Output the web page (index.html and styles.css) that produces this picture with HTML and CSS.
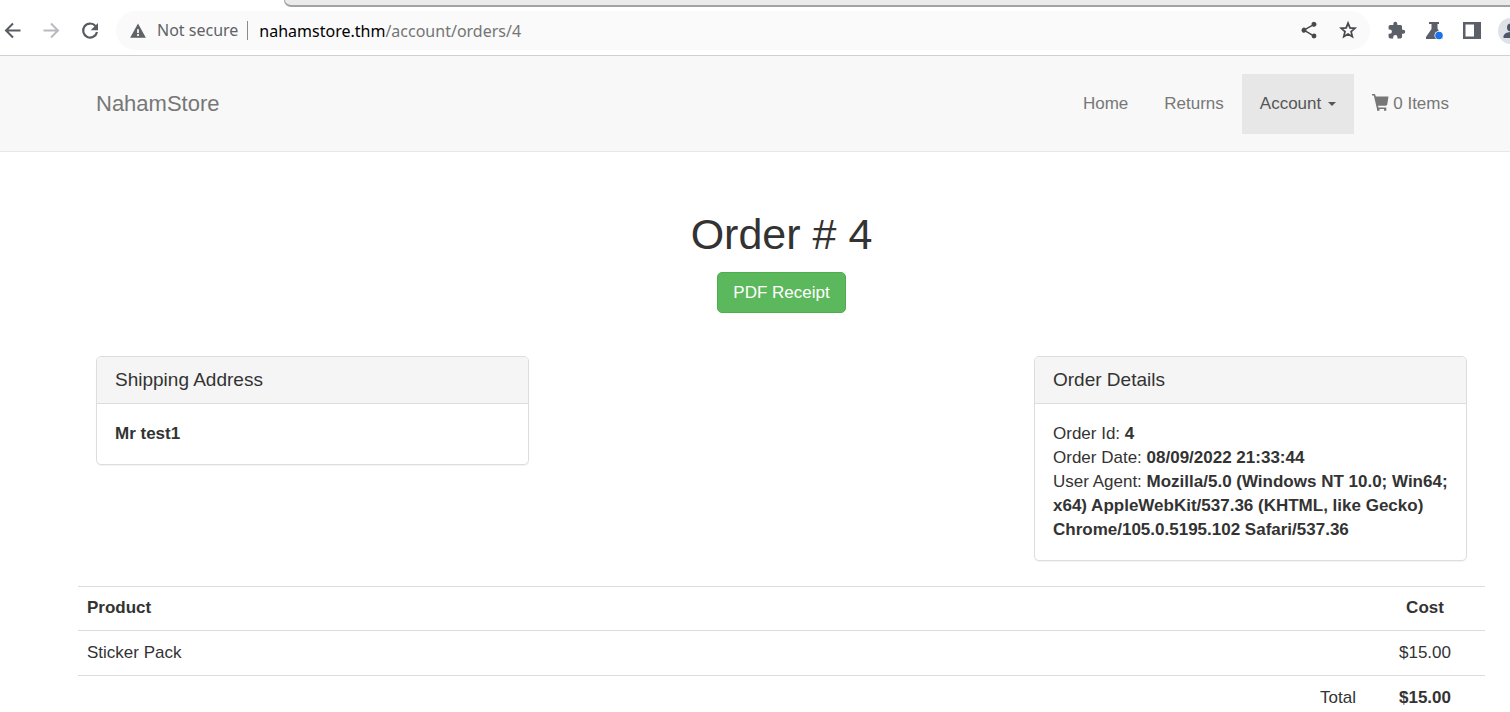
FILE: index.html
```html
<!DOCTYPE html>
<html lang="en">
<head>
<meta charset="utf-8">
<title>NahamStore</title>
<link rel="stylesheet" href="styles.css">
</head>
<body>
<div class="browser">
  <div class="window-edge"></div>
  <div class="toolbar">
    <div class="history">
      <button class="tool" type="button" aria-label="Back"><svg width="24" height="24" viewBox="0 0 24 24" fill="none" stroke="#575c64" stroke-width="2"><path d="M20.500 11.500H6M13 4.500l-7 7 7 7"/></svg></button>
      <button class="tool" type="button" aria-label="Forward" disabled><svg width="24" height="24" viewBox="0 0 24 24" fill="none" stroke="#b9babd" stroke-width="2"><path d="M4.500 11.500H18.500M12 4.500l7 7-7 7"/></svg></button>
      <button class="tool" type="button" aria-label="Reload"><svg width="24" height="24" viewBox="0 0 24 24" fill="none"><path d="M17.500 7A7 7 0 1 0 19 13" stroke="#575c64" stroke-width="2.200"/><path d="M20 4v7.300h-7.300z" fill="#575c64"/></svg></button>
    </div>
    <div class="address">
      <svg width="18" height="18" viewBox="0 0 24 24" fill="#5f6368"><path d="M1.500 21h21L12 2zM13.200 18.500h-2.400v-2.400h2.400zm0-4h-2.400V9.500h2.400z" fill-rule="evenodd"/></svg>
      <span class="security">Not secure</span>
      <span class="url"><span class="host">nahamstore.thm</span>/account/orders/4</span>
      <button class="tool" type="button" aria-label="Share"><svg width="20" height="20" viewBox="0 0 24 24" fill="#47494d"><path d="M18 15.080c-.76 0-1.440.3-1.960.77L8.910 11.700c.05-.23.09-.46.09-.7s-.04-.47-.09-.7l7.050-4.110A3 3 0 1 0 15 4c0 .24.040.47.090.7L8.040 8.810a3 3 0 1 0 0 4.380l7.120 4.160c-.05.21-.08.43-.08.650a2.920 2.920 0 1 0 2.920-2.920z"/></svg></button>
      <button class="tool" type="button" aria-label="Bookmark this page"><svg width="21" height="21" viewBox="0 0 24 24" fill="none" stroke="#47494d" stroke-width="2"><path d="M11.500 3.600l2.200 5.400 5.700.5-4.400 3.800 1.400 5.700-4.900-3.100L6.600 19 8 13.300 3.600 9.500 9.300 9z"/></svg></button>
    </div>
    <div class="extensions">
      <button class="tool" type="button" aria-label="Extensions"><svg width="19" height="19" viewBox="0 0 24 24" fill="#5b5f68"><path d="M20.500 11H19V7a2 2 0 0 0-2-2h-4V3.500a2.500 2.500 0 0 0-5 0V5H4a2 2 0 0 0-2 2v3.800h1.500a2.700 2.700 0 0 1 0 5.400H2V20c0 1.100.9 2 2 2h3.800v-1.500a2.700 2.700 0 0 1 5.400 0V22H17a2 2 0 0 0 2-2v-4h1.500a2.500 2.500 0 0 0 0-5z"/></svg></button>
      <button class="tool" type="button" aria-label="Experiments"><svg width="20" height="20" viewBox="0 0 20 20"><path d="M5 1h10v2h-1.500v4.500L18.500 17v1H2v-2L7.500 8V3H5z" fill="#5b5f68"/><circle cx="15" cy="14.500" r="4.500" fill="#fff"/><circle cx="15" cy="14.500" r="3.800" fill="#1a73e8"/></svg></button>
      <button class="tool" type="button" aria-label="Side panel"><svg width="20" height="20" viewBox="0 0 20 20"><path d="M1 1h18v17H1zM3.500 3.500v12H12v-12z" fill="#5b5f68" fill-rule="evenodd"/></svg></button>
      <button class="tool avatar" type="button" aria-label="Profile"><svg width="26" height="26" viewBox="0 0 26 26"><circle cx="13" cy="13" r="13" fill="#dee1e6"/><circle cx="13" cy="9.500" r="4" fill="#4c566a"/><path d="M5.500 20v-1.500c0-3 4.500-4.500 7.500-4.500s7.500 1.500 7.500 4.500V20z" fill="#4c566a"/></svg></button>
    </div>
  </div>
</div>

<header class="navbar">
  <a class="brand" href="#">NahamStore</a>
  <nav class="menu">
    <a href="#">Home</a>
    <a href="#">Returns</a>
    <a class="active" href="#">Account<span class="caret"></span></a>
    <a href="#"><svg class="cart" width="17" height="21" viewBox="0 0 17 21"><path d="M0 0h3l.8 2.500H16.500l-1.300 8.300-1.200 1H6l.5 1.700h7.800V15H5L1.800 1.500H0z" fill="#777"/><path d="M5 15h2.500v1.800H5zm7 0h2.300v1.800H12z" fill="#777"/></svg> 0 Items</a>
  </nav>
</header>

<main class="container">
  <h1>Order # 4</h1>
  <div class="actions"><a class="btn" href="#">PDF Receipt</a></div>
  <div class="panels">
    <section class="panel">
      <h2>Shipping Address</h2>
      <div class="panel-body"><b>Mr test1</b></div>
    </section>
    <section class="panel details">
      <h2>Order Details</h2>
      <div class="panel-body">
        <div>Order Id: <b>4</b></div>
        <div>Order Date: <b>08/09/2022 21:33:44</b></div>
        <div>User Agent: <b>Mozilla/5.0 (Windows NT 10.0; Win64; x64) AppleWebKit/537.36 (KHTML, like Gecko) Chrome/105.0.5195.102 Safari/537.36</b></div>
      </div>
    </section>
  </div>
  <table class="items">
    <thead><tr><th>Product</th><th class="cost">Cost</th></tr></thead>
    <tbody>
      <tr><td>Sticker Pack</td><td class="cost">$15.00</td></tr>
      <tr><td class="total">Total</td><td class="cost"><b>$15.00</b></td></tr>
    </tbody>
  </table>
</main>
</body>
</html>
```
FILE: styles.css
```css
* { box-sizing: border-box; }

body {
  margin: 0;
  height: 100vh;
  overflow: hidden;
  background: #fff;
  color: #333;
  font: 17px/24px "Liberation Sans", Arial, sans-serif;
}

a { color: inherit; text-decoration: none; }
svg { display: block; flex: none; }

/* Browser chrome */
.browser {
  border-bottom: 1px solid #d0d0d0;
  font: 16px/24px "Noto Sans", sans-serif;
  overflow: hidden;
}

.window-edge {
  height: 7px;
  margin-left: 284px;
  background: #ebebeb;
  border: solid #a3a3a3;
  border-width: 0 0 2px 1px;
  border-bottom-left-radius: 8px;
}

.toolbar { display: flex; align-items: center; padding: 4px 0 5px; }

.tool {
  display: flex;
  flex: none;
  align-items: center;
  justify-content: center;
  width: 24px;
  height: 24px;
  padding: 0;
  border: 0;
  background: none;
}

.history { display: flex; gap: 15px; width: 116px; flex: none; }

.address {
  display: flex;
  flex: 1;
  align-items: center;
  gap: 15px;
  height: 39px;
  padding: 0 10px 0 13px;
  border-radius: 20px;
  background: #fafafa;
}

.security {
  margin-left: -5px;
  padding-right: 9px;
  border-right: 1px solid #8a8a8a;
  line-height: 19px;
  color: #5f6368;
  white-space: nowrap;
}

.url { flex: 1; margin-left: -4px; color: #757575; white-space: nowrap; }
.host { color: #000; }

.extensions { display: flex; flex: none; align-items: center; gap: 14px; width: 140px; padding-left: 14px; }
.avatar { width: 26px; height: 26px; }

/* Store navigation */
.navbar {
  display: flex;
  align-items: center;
  justify-content: space-between;
  padding: 18px 43px 17px 96px;
  border-bottom: 1px solid #e7e7e7;
  background: #f8f8f8;
  color: #777;
}

.brand { font-size: 22px; }
.menu { display: flex; }
.menu a { display: flex; align-items: center; gap: 4px; padding: 18px; white-space: nowrap; }
.menu .active { gap: 7px; background: #e7e7e7; color: #555; }

.caret { border: solid transparent; border-width: 4px 4px 0; border-top-color: #555; }

/* Order page */
.container { padding: 58px 25px 0 78px; text-align: center; }

h1 { margin: 0 0 14px; font-size: 43px; font-weight: 400; line-height: 48px; }

.btn {
  display: inline-block;
  padding: 7px 15px;
  border: 1px solid #4cae4c;
  border-radius: 5px;
  background: #5cb85c;
  color: #fff;
  line-height: 25px;
}

.actions { display: flex; justify-content: center; margin-bottom: 43px; }

.panels {
  display: grid;
  grid-template-columns: repeat(3, 1fr);
  align-items: start;
  gap: 36px;
  padding: 0 18px;
  margin-bottom: 25px;
  text-align: left;
}

.details { grid-column: 3; }

.panel {
  border: 1px solid #ddd;
  border-radius: 5px;
  box-shadow: 0 1px 1px rgba(0, 0, 0, .05);
}

.panel h2 {
  margin: 0;
  padding: 11px 18px 12px;
  border-bottom: 1px solid #ddd;
  border-radius: 4px 4px 0 0;
  background: #f5f5f5;
  font-size: 19px;
  font-weight: 400;
  line-height: 23px;
}

.panel-body { padding: 18px; }

.items { width: 100%; border-collapse: collapse; text-align: left; }
.items th, .items td { padding: 10px 9px; border-top: 1px solid #ddd; }
.items th { padding: 9px 9px 10px; }
.items .cost { width: 120px; text-align: center; }
.items .total { text-align: right; }
```
